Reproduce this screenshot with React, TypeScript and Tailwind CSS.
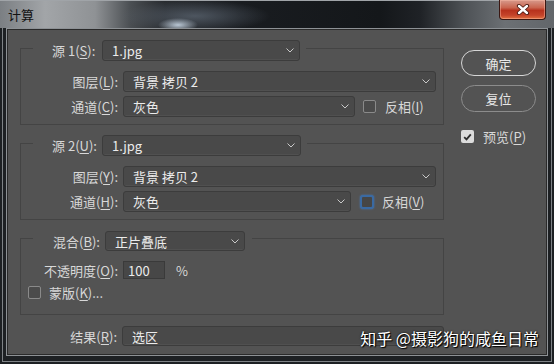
import React from "react";

const Chevron = () => (
  <svg width="8" height="5" viewBox="0 0 8 5" className="shrink-0">
    <path d="M0.5 0.5L4 4L7.5 0.5" stroke="#c9c9c9" strokeWidth="1" fill="none" />
  </svg>
);

function Drop({ cls, text }: { cls: string; text: string }) {
  return (
    <div
      className={
        "flex items-center justify-between rounded-[3px] border border-[#3c3c3c] bg-[#494949] pl-[9px] pr-[5px] text-[#ececec] shadow-[inset_0_-1px_0_#505050] " +
        cls
      }
    >
      <span className="leading-none">{text}</span>
      <Chevron />
    </div>
  );
}

function U({ children }: { children: React.ReactNode }) {
  return <span className="underline decoration-1 underline-offset-[2px]">{children}</span>;
}

function Box() {
  return <div className="h-[13px] w-[13px] shrink-0 rounded-[2px] border border-[#8a8a8a] bg-[#4b4b4b]" />;
}

function Group({
  src,
  k1,
  k2,
  k3,
  k4,
  srcW,
  chW,
  focus,
}: {
  src: string;
  k1: string;
  k2: string;
  k3: string;
  k4: string;
  srcW: string;
  chW: string;
  focus?: boolean;
}) {
  return (
    <div className="flex h-[77px] flex-col border border-[#444444]">
      <div className="-mt-[9px] flex h-[21px]">
        <div className="ml-[12px] flex items-center bg-[#535353] pl-[19px] pr-[6px]">
          <span className="w-[50px] whitespace-nowrap text-[#d8d8d8]">
            源 {src}(<U>{k1}</U>):
          </span>
          <Drop cls={"h-[21px] " + srcW} text="1.jpg" />
        </div>
      </div>
      <div className="mt-[10px] flex h-[21px] items-center">
        <span className="w-[97px] whitespace-nowrap text-right text-[#d8d8d8]">
          图层(<U>{k2}</U>):
        </span>
        <Drop cls="ml-[5px] h-[21px] w-[313px]" text="背景 拷贝 2" />
      </div>
      <div className="mt-[4px] flex h-[21px] items-center">
        <span className="w-[97px] whitespace-nowrap text-right text-[#d8d8d8]">
          通道(<U>{k3}</U>):
        </span>
        <Drop cls={"ml-[5px] h-[21px] " + chW} text="灰色" />
        {focus ? (
          <>
            <div className="ml-[9px] h-[14px] w-[14px] shrink-0 rounded-[3px] border-2 border-[#3a6aa3] bg-[#464646] shadow-[0_0_2px_#4a7ab5]" />
            <span className="ml-[8px] whitespace-nowrap text-[#d8d8d8]">
              反相(<U>{k4}</U>)
            </span>
          </>
        ) : (
          <>
            <div className="ml-[8px]">
              <Box />
            </div>
            <span className="ml-[9px] whitespace-nowrap text-[#d8d8d8]">
              反相(<U>{k4}</U>)
            </span>
          </>
        )}
      </div>
    </div>
  );
}

export default function App() {
  return (
    <div className="relative flex h-[364px] w-[554px] flex-col overflow-hidden bg-[#1d2023] font-['Noto_Sans_CJK_SC',sans-serif] text-[13px] leading-none">
      {/* title bar */}
      <div className="flex h-[28px] shrink-0 items-start bg-[radial-gradient(ellipse_20px_7px_at_178px_25px,rgba(200,214,228,0.9),transparent),radial-gradient(ellipse_75px_16px_at_195px_16px,rgba(92,102,114,0.75),transparent),linear-gradient(to_right,#7b7f83_0px,#a2a5a8_45px,#8f9295_95px,#4b4f53_130px,#272a2e_165px,#191c20_240px,#14171a_380px,#1f2226_420px,#4e5256_465px,#6c7074_505px,#62666a_554px)] shadow-[inset_0_1px_0_#a0a4a8]">
        <div className="flex h-[28px] items-center pl-[8px] text-[13px] text-[#121212]">计算</div>
        <div className="ml-auto mr-[8px] flex h-[20px] w-[47px] items-center justify-center rounded-b-[4px] border border-t-0 border-[#3a1712] bg-[linear-gradient(to_bottom,#d79a8c_0%,#c9654f_40%,#b7321d_55%,#c4432a_80%,#e0713f_100%)] shadow-[inset_0_0_0_1px_rgba(255,190,170,0.45)]">
          <svg width="14" height="11" viewBox="0 0 14 11">
            <path d="M3 2L11 9M11 2L3 9" stroke="#4a1a12" strokeWidth="4.2" strokeLinecap="round" />
            <path d="M3 2L11 9M11 2L3 9" stroke="#ffffff" strokeWidth="2.4" strokeLinecap="round" />
          </svg>
        </div>
      </div>

      {/* frame body */}
      <div className="flex flex-1 flex-col px-[2px] pb-[2px]">
        <div className="flex flex-1 flex-col border-x border-b border-[#7e8286] px-[3px] pb-[5px]">
          <div className="flex flex-1 flex-col border border-[#8d9195]">
            <div className="flex flex-1 border border-[#2a2a2a] bg-[#535353]">
              {/* left column */}
              <div className="flex w-[436px] shrink-0 flex-col pl-[12px] pt-[18px]">
                <Group src="1" k1="S" k2="L" k3="C" k4="I" srcW="w-[198px]" chW="w-[232px]" />
                <div className="mt-[18px]">
                  <Group src="2" k1="U" k2="Y" k3="H" k4="V" srcW="w-[199px]" chW="w-[228px]" focus />
                </div>
                <div className="mt-[18px] flex h-[77px] flex-col border border-[#444444]">
                  <div className="-mt-[8px] flex h-[20px]">
                    <div className="ml-[12px] flex items-center bg-[#535353] pl-[20px] pr-[7px]">
                      <span className="w-[52px] whitespace-nowrap text-[#d8d8d8]">
                        混合(<U>B</U>):
                      </span>
                      <Drop cls="h-[20px] w-[140px]" text="正片叠底" />
                    </div>
                  </div>
                  <div className="mt-[10px] flex h-[18px] items-center">
                    <span className="w-[97px] whitespace-nowrap text-right text-[#d8d8d8]">
                      不透明度(<U>O</U>):
                    </span>
                    <div className="ml-[5px] flex h-[18px] w-[42px] items-center border border-[#3a3a3a] bg-[#474747] pl-[4px] text-[#ececec]">
                      100
                    </div>
                    <span className="ml-[11px] text-[#d8d8d8]">%</span>
                  </div>
                  <div className="mt-[7px] flex h-[13px] items-center pl-[7px]">
                    <Box />
                    <span className="ml-[8px] whitespace-nowrap text-[#d8d8d8]">
                      蒙版(<U>K</U>)...
                    </span>
                  </div>
                </div>
                <div className="mt-[11px] flex h-[20px] items-center">
                  <span className="w-[98px] whitespace-nowrap text-right text-[#d8d8d8]">
                    结果(<U>R</U>):
                  </span>
                  <Drop cls="ml-[5px] h-[20px] w-[322px] shrink-0" text="选区" />
                </div>
              </div>

              {/* right column */}
              <div className="ml-[17px] flex flex-col pt-[20px]">
                <div className="flex h-[26px] w-[75px] items-center justify-center rounded-full border-[1.5px] border-[#d6d6d6] text-[#e8e8e8]">
                  确定
                </div>
                <div className="mt-[9px] flex h-[27px] w-[75px] items-center justify-center rounded-full border border-[#8c8c8c] text-[#e8e8e8]">
                  复位
                </div>
                <div className="mt-[18px] flex h-[13px] items-center">
                  <div className="flex h-[13px] w-[13px] items-center justify-center rounded-[2px] bg-[#dcdcdc]">
                    <svg width="9" height="8" viewBox="0 0 9 8">
                      <path d="M1.2 4.2L3.5 6.4L7.8 1.4" stroke="#2e2e2e" strokeWidth="1.8" fill="none" />
                    </svg>
                  </div>
                  <span className="ml-[9px] whitespace-nowrap text-[#d8d8d8]">
                    预览(<U>P</U>)
                  </span>
                </div>
              </div>
            </div>
          </div>
        </div>
      </div>

      {/* watermark */}
      <div className="absolute right-[15px] top-[330px] whitespace-nowrap text-[16px] leading-none text-white [text-shadow:0_0_2px_#000,1px_1px_1px_#000]">
        知乎 @摄影狗的咸鱼日常
      </div>
    </div>
  );
}
